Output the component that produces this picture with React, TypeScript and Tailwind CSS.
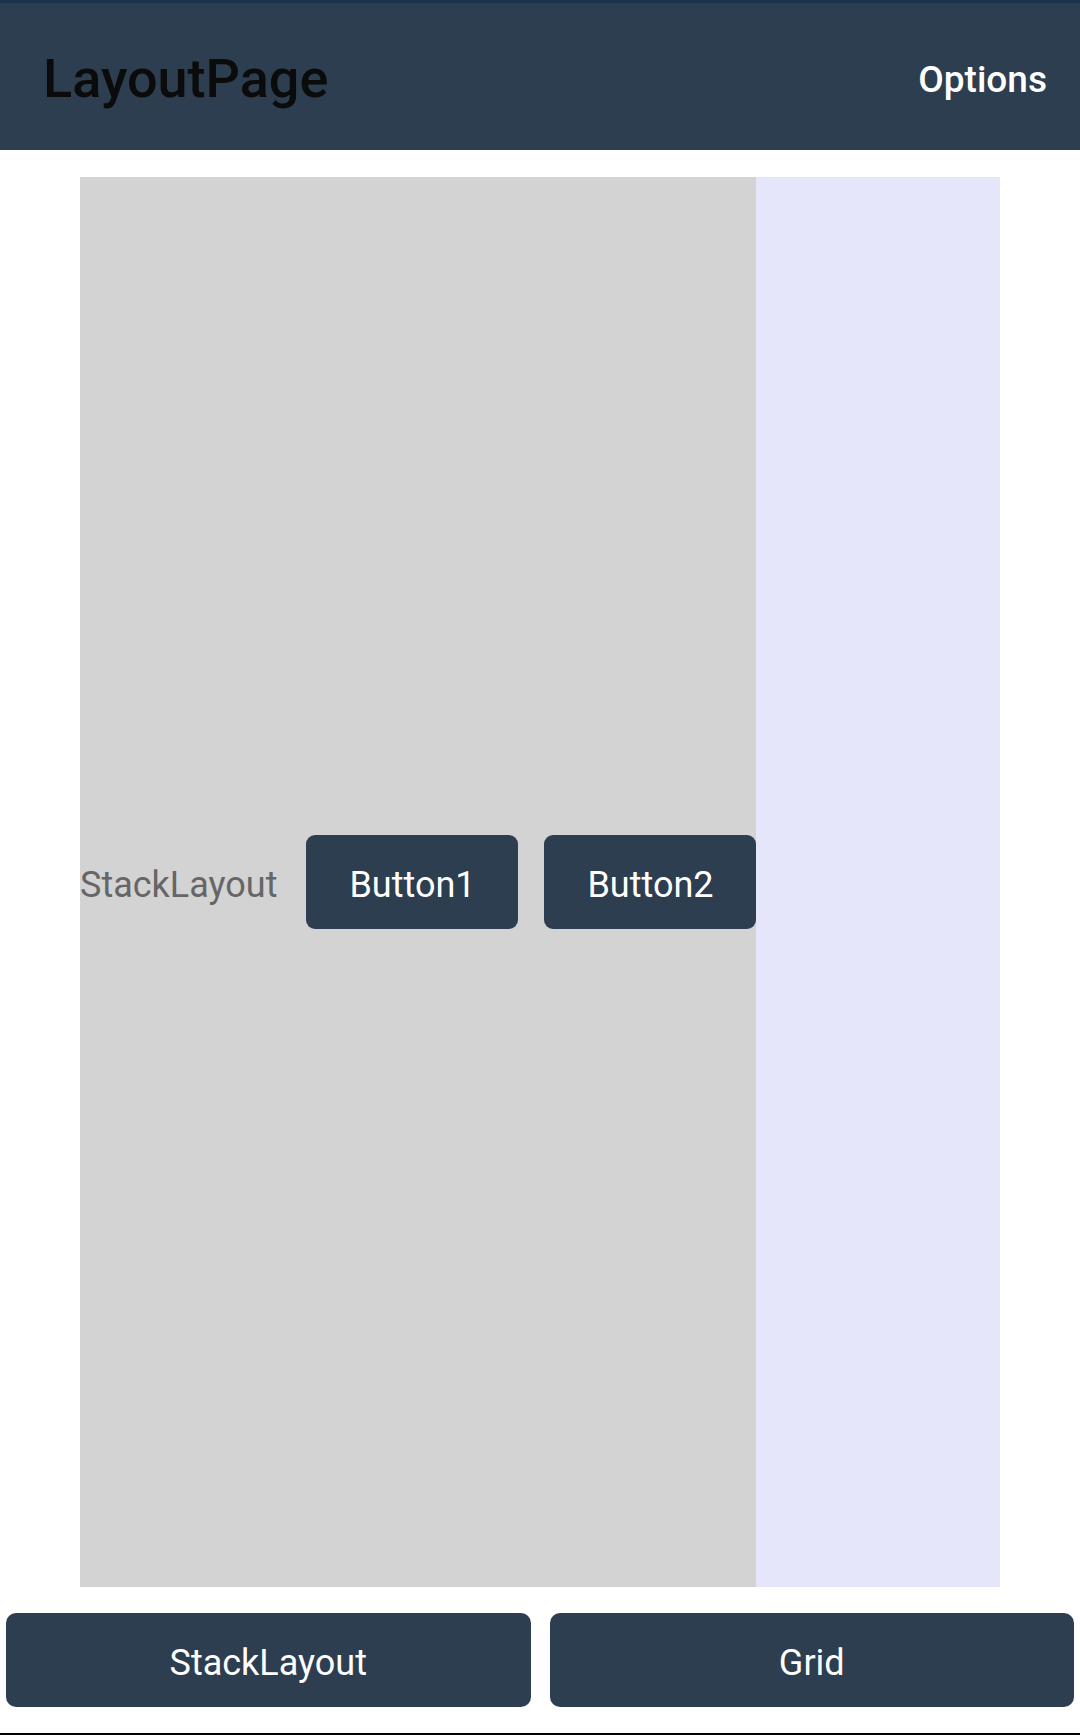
const font = { fontFamily: 'Roboto, "Liberation Sans", sans-serif' }

const StackButton = ({ label }: { label: string }) => (
  <button className="h-[94px] w-[212px] rounded-[9px] bg-[#2c3e50] pt-[6px] text-[36px] text-white">
    {label}
  </button>
)

const TabButton = ({ label }: { label: string }) => (
  <button className="h-[94px] flex-1 rounded-[10px] bg-[#2c3e50] pt-[6px] text-[36px] text-white">
    {label}
  </button>
)

export default function App() {
  return (
    <div className="flex h-[1735px] w-[1080px] flex-col bg-white" style={font}>
      <header className="flex h-[150px] shrink-0 items-center justify-between border-t-[3px] border-[#1d334c] bg-[#2c3e50] pl-[43px] pr-[33px] pt-[5px]">
        <h1 className="text-[54px] font-medium leading-none text-[#0b0b0b]">
          LayoutPage
        </h1>
        <span className="text-[37px] font-medium leading-none text-white">
          Options
        </span>
      </header>

      <main className="mx-[80px] mt-[27px] flex h-[1410px] shrink-0">
        <div className="flex items-center bg-[#d3d3d3]">
          <span className="mr-[29px] pt-[6px] text-[36px] text-[#666666]">StackLayout</span>
          <div className="flex gap-[26px]">
            <StackButton label="Button1" />
            <StackButton label="Button2" />
          </div>
        </div>
        <div className="flex-1 bg-[#e6e6fa]" />
      </main>

      <nav className="mt-[26px] flex gap-[19px] px-[6px]">
        <TabButton label="StackLayout" />
        <TabButton label="Grid" />
      </nav>

      <div className="mt-auto h-[2px] bg-black" />
    </div>
  )
}
